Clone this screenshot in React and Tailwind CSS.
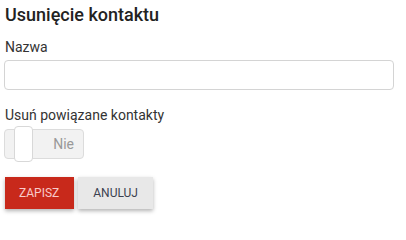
export default function App() {
  return (
    <div className="w-[406px] h-[217px] bg-white pl-[4px] pr-[12px] pt-[3px] font-['Roboto',sans-serif] text-[#333]">
      <h1 className="pl-[1px] text-[18px] leading-[24px] font-medium text-[#222]">Usunięcie kontaktu</h1>

      <label className="block mt-[10px] pl-[1px] text-[14px] leading-[20px]">Nazwa</label>
      <input
        type="text"
        className="block mt-[3px] w-[390px] h-[30px] rounded-[4px] border border-[#d4d4d4] bg-white px-2 text-[14px] outline-none"
      />

      <div className="mt-[15px] pl-[1px] text-[14px] leading-[20px]">Usuń powiązane kontakty</div>

      <div className="relative mt-[4px] w-[80px] h-[30px]">
        <div className="absolute inset-0 flex items-center justify-end pr-[9px] rounded-[4px] border border-[#dcdcdc] bg-[#f2f2f2] text-[14px] text-[#999]">
          Nie
        </div>
        <div className="absolute left-[10px] top-[-3px] w-[19px] h-[36px] rounded-[4px] border border-[#d8d8d8] bg-white" />
      </div>

      <div className="flex gap-[4px] mt-[18px] pl-[1px]">
        <button className="h-[32px] pl-[14px] pr-[15px] bg-[#c8291b] text-[12px] font-normal text-[#f8caca] shadow-[0_2px_4px_rgba(0,0,0,0.3)]">
          ZAPISZ
        </button>
        <button className="h-[32px] px-[15px] bg-[#e8e8e8] text-[12px] font-normal text-[#3c4250] shadow-[0_2px_4px_rgba(0,0,0,0.3)]">
          ANULUJ
        </button>
      </div>
    </div>
  );
}
